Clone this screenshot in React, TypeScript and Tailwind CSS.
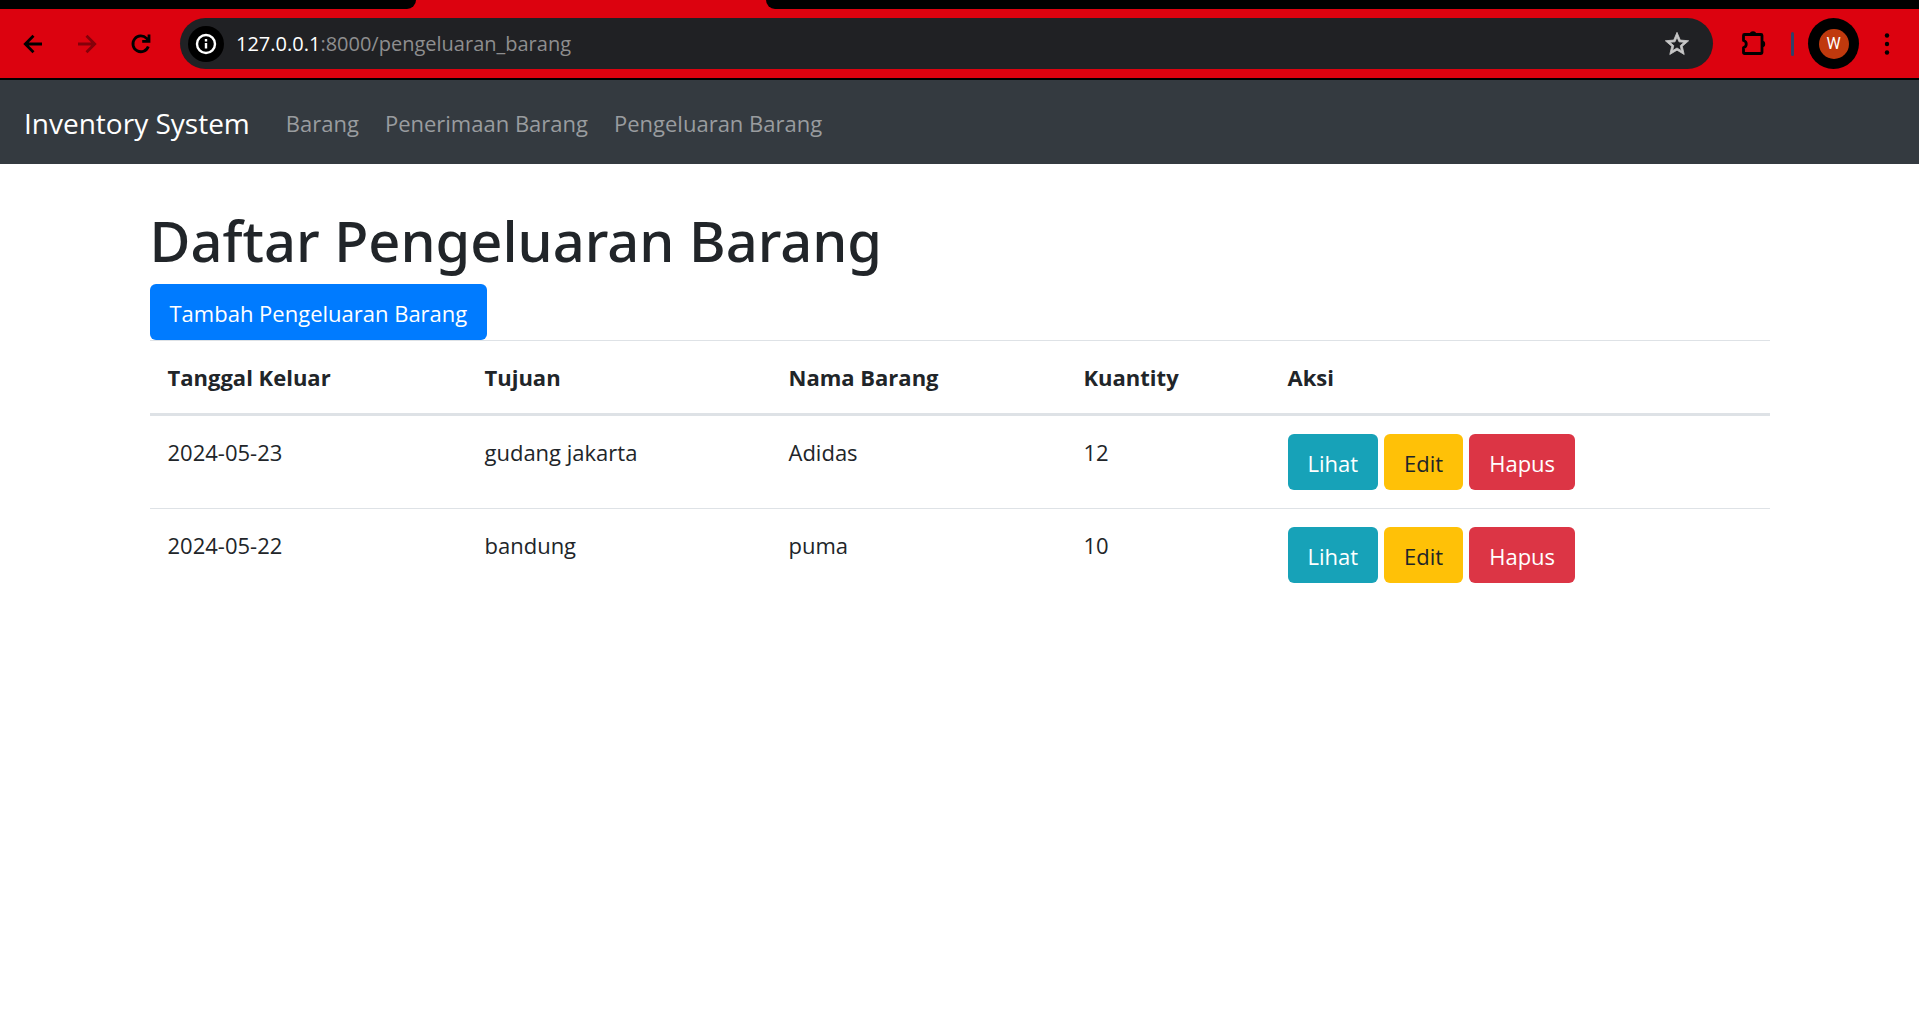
import React from "react";

const rows = [
  { date: "2024-05-23", dest: "gudang jakarta", name: "Adidas", qty: 12 },
  { date: "2024-05-22", dest: "bandung", name: "puma", qty: 10 },
];

function BrowserBar() {
  return (
    <header className="bg-[#dc020f] border-b-2 border-black">
      <div className="flex h-[9px]">
        <div className="w-[416px] bg-black rounded-br-[12px]" />
        <div className="w-[350px]" />
        <div className="flex-1 bg-black rounded-bl-[12px]" />
      </div>
      <div className="flex h-[69px] items-center pl-[21px] pr-5">
        <button aria-label="Back" className="flex size-6 items-center justify-center">
          <svg viewBox="0 0 24 24" className="size-6" fill="none" stroke="#000" strokeWidth="2.8">
            <path d="M21 12H5M12.5 3.800 4.300 12l8.200 8.200" />
          </svg>
        </button>
        <button aria-label="Forward" className="ml-[30px] flex size-6 items-center justify-center">
          <svg viewBox="0 0 24 24" className="size-6" fill="none" stroke="#84010a" strokeWidth="2.8">
            <path d="M3 12h16M11.500 3.800 19.700 12l-8.200 8.200" />
          </svg>
        </button>
        <button aria-label="Reload" className="ml-[30px] flex size-6 items-center justify-center">
          <svg viewBox="0 0 24 24" className="size-6" fill="none" stroke="#000" strokeWidth="2.8">
            <path d="M19.300 14.500A7.900 7.900 0 1 1 17.600 6.400L20 9M20 2.600V9.400H13.200" />
          </svg>
        </button>
        <div className="ml-[27px] flex h-[51px] flex-1 items-center rounded-full bg-[#202124] pl-2 pr-[22px]">
          <button aria-label="Site information" className="flex size-9 items-center justify-center rounded-full bg-black">
            <svg viewBox="0 0 24 24" className="size-6" fill="none" stroke="#fff" strokeWidth="2.400">
              <circle cx="12" cy="12" r="9" />
              <path d="M12 11v5.500M12 7v2.400" />
            </svg>
          </button>
          <p className="ml-3 flex-1 text-[20px] leading-[28px] text-[#8e8e8f]">
            <span className="text-white">127.0.0.1</span>:8000/pengeluaran_barang
          </p>
          <button aria-label="Bookmark">
            <svg viewBox="0 0 24 24" className="size-7" fill="#c7c7c7" stroke="#c7c7c7" strokeWidth="0.7">
              <path d="M22 9.240l-7.190-.620L12 2 9.190 8.630 2 9.240l5.460 4.730L5.820 21 12 17.270 18.180 21l-1.630-7.030L22 9.240zM12 15.400l-3.760 2.270 1-4.280-3.320-2.880 4.380-.380L12 6.100l1.710 4.040 4.380.380-3.320 2.880 1 4.280L12 15.400z" />
            </svg>
          </button>
        </div>
        <button aria-label="Extensions" className="ml-7">
          <svg viewBox="0 0 26 26" className="size-[26px]" fill="none" stroke="#000" strokeWidth="2.8">
            <path d="M2.500 4.500q0-1 1-1H20q1 0 1 1v17q0 1-1 1H3.500q-1 0-1-1v-5a3.600 3.600 0 0 0 0-7z" strokeLinejoin="round" />
            <path d="M8.800 3.500a3.200 3.200 0 0 1 6.400 0zM21 9.800a3.200 3.200 0 0 1 0 6.400z" fill="#000" stroke="none" />
          </svg>
        </button>
        <div className="ml-6 h-6 w-[3px] rounded-full bg-[#314169]" />
        <button aria-label="Profile" className="ml-[14px] flex size-[51px] items-center justify-center rounded-full bg-black">
          <span className="flex size-[30px] items-center justify-center rounded-full bg-[#c0390d] font-[Roboto] text-[16px] text-white">W</span>
        </button>
        <button aria-label="Menu" className="ml-4">
          <svg viewBox="0 0 24 24" className="size-6" fill="#000">
            <circle cx="12" cy="3.500" r="2.200" />
            <circle cx="12" cy="12" r="2.200" />
            <circle cx="12" cy="20.500" r="2.200" />
          </svg>
        </button>
      </div>
    </header>
  );
}

export default function App() {
  return (
    <div className="min-h-screen bg-white font-['Open_Sans',sans-serif] text-[22px] leading-[36px] text-[#212529]">
      <BrowserBar />
      <nav className="flex h-[84px] items-center bg-[#343a40] px-6 pt-[2px] text-[#999c9f]">
        <a href="#" className="mr-9 text-[28px] text-white">Inventory System</a>
        <div className="flex gap-[26px]">
          <a href="#">Barang</a>
          <a href="#">Penerimaan Barang</a>
          <a href="#">Pengeluaran Barang</a>
        </div>
      </nav>
      <main className="mx-auto max-w-[1620px] pt-10">
        <h1 className="mb-2 font-['Noto_Sans',sans-serif] text-[56px] font-medium leading-[72px]">Daftar Pengeluaran Barang</h1>
        <a href="#" className="flex h-14 w-fit items-center rounded-md bg-[#007bff] px-5 pt-[2px] text-white">Tambah Pengeluaran Barang</a>
        <table className="w-full table-fixed border-t border-[#dee2e6] text-left">
          <colgroup>
            <col className="w-[317px]" />
            <col className="w-[304px]" />
            <col className="w-[295px]" />
            <col className="w-[204px]" />
            <col />
          </colgroup>
          <thead>
            <tr className="border-b-[3px] border-[#dee2e6]">
              {["Tanggal Keluar", "Tujuan", "Nama Barang", "Kuantity", "Aksi"].map((h) => (
                <th key={h} scope="col" className="px-[18px] py-[18px] font-bold">{h}</th>
              ))}
            </tr>
          </thead>
          <tbody>
            {rows.map((r) => (
              <tr key={r.date} className="border-b border-[#dee2e6] align-top last:border-b-0">
                <td className="p-[18px]">{r.date}</td>
                <td className="p-[18px]">{r.dest}</td>
                <td className="p-[18px]">{r.name}</td>
                <td className="p-[18px]">{r.qty}</td>
                <td className="p-[18px]">
                  <div className="flex gap-[6px]">
                    <a href="#" className="flex h-14 items-center rounded-md bg-[#17a2b8] px-5 pt-[2px] text-white">Lihat</a>
                    <a href="#" className="flex h-14 items-center rounded-md bg-[#ffc107] px-5 pt-[2px]">Edit</a>
                    <button className="flex h-14 items-center rounded-md bg-[#dc3545] px-5 pt-[2px] text-white">Hapus</button>
                  </div>
                </td>
              </tr>
            ))}
          </tbody>
        </table>
      </main>
    </div>
  );
}
